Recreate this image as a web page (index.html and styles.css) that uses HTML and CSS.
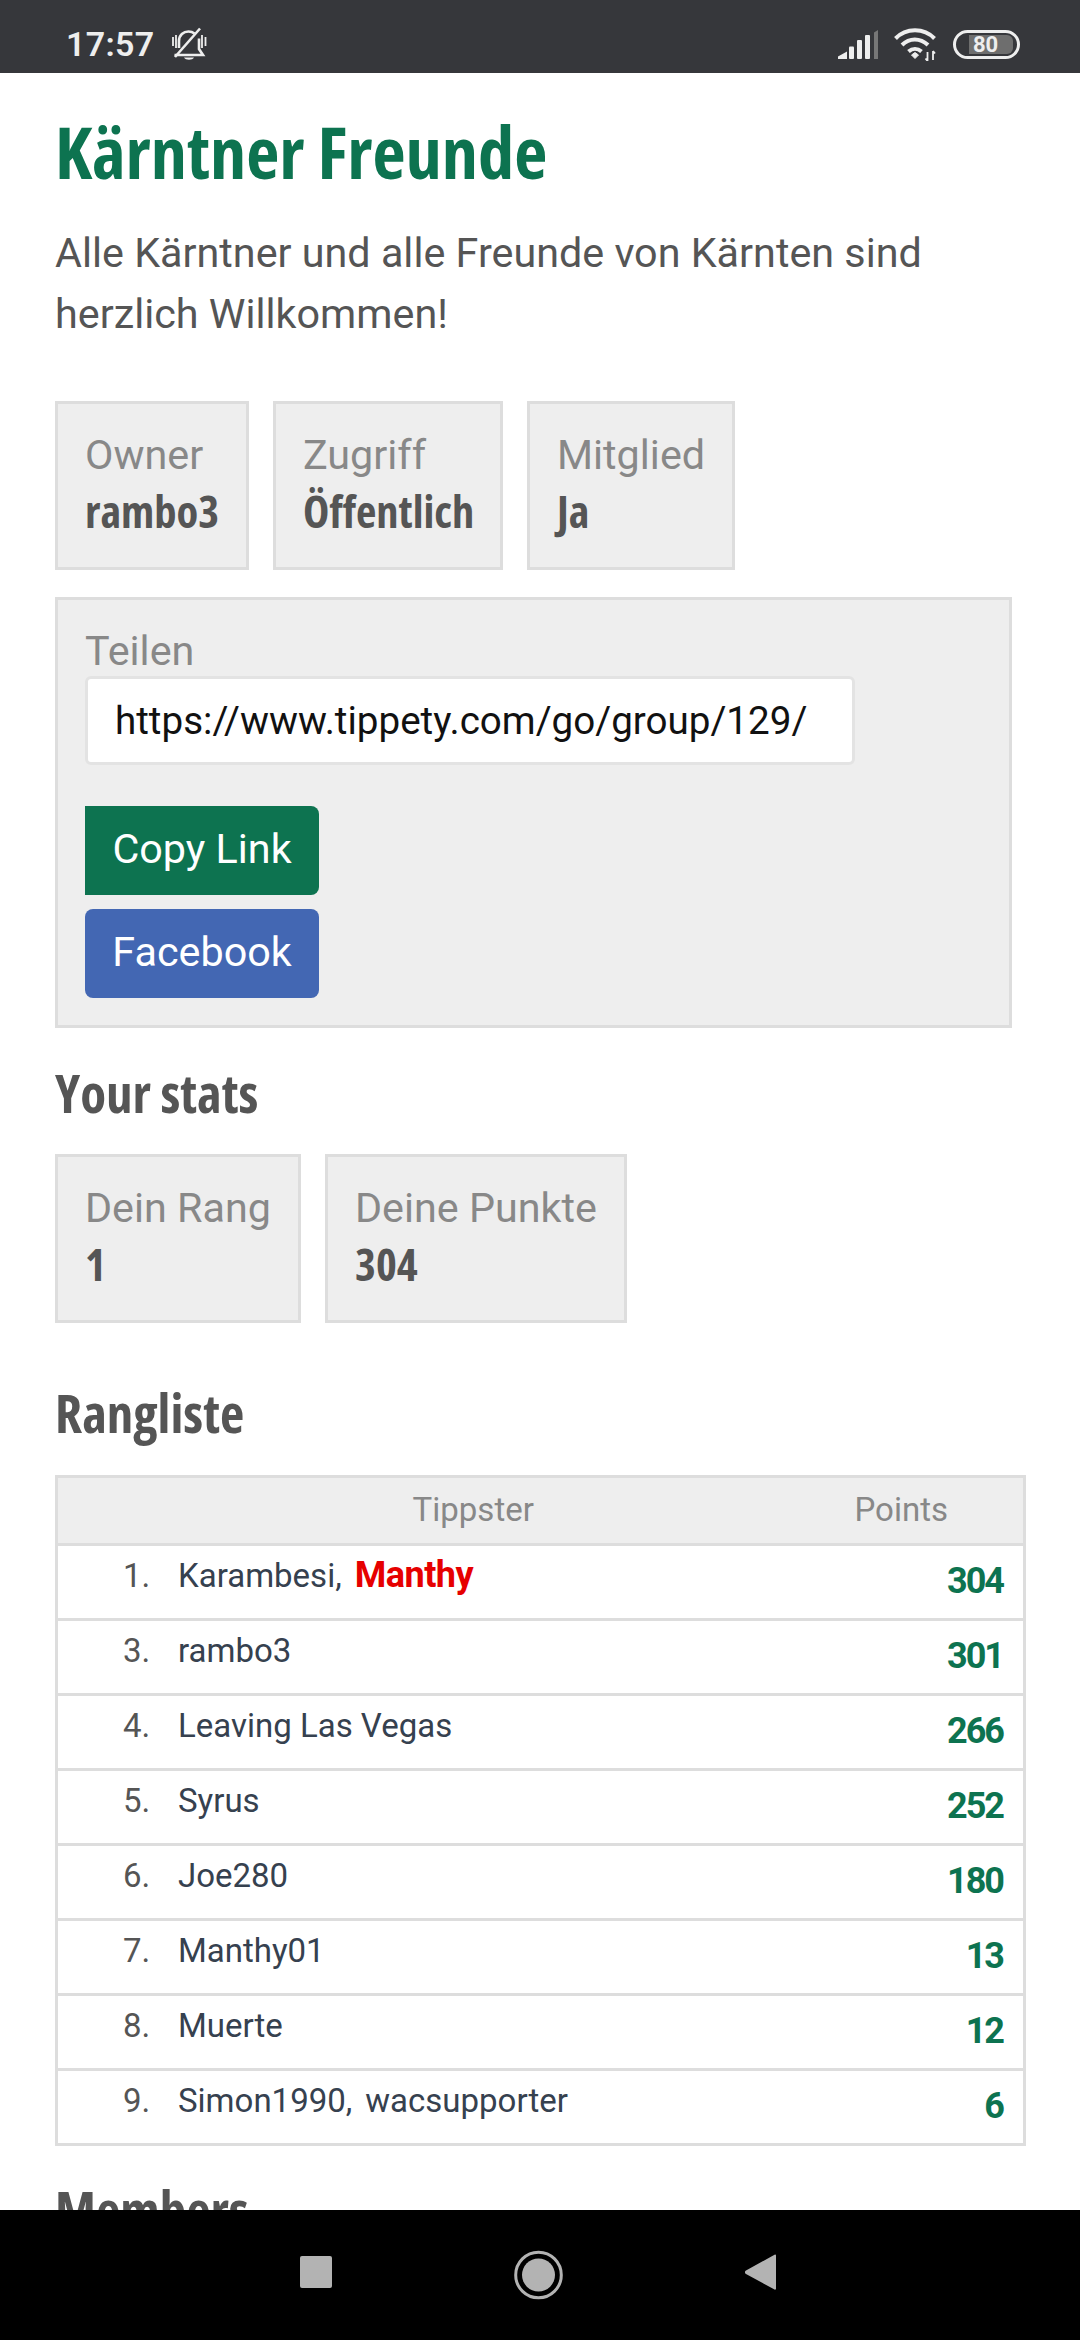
FILE: index.html
```html
<!DOCTYPE html>
<html lang="de">
<head>
<meta charset="utf-8">
<title>Kärntner Freunde</title>
<link rel="stylesheet" href="styles.css">
</head>
<body>
<div class="screen">
  <header class="status">
    <div class="status-left">
      <span class="time">17:57</span>
      <svg class="bell" width="36" height="34" viewBox="0 0 36 34" fill="none" stroke="#eee" stroke-width="2.600">
        <path d="M8 21v-7c0-6 4.500-9.500 9.500-9.500 2.500 0 4.500.8 6 2"/>
        <path d="M28 11.500V22l4 6H3.500"/>
        <path d="M4 30L29 1.500"/>
        <path d="M2 10v9M5 8v13M31 8v13M34.500 10v9" stroke-width="1.800"/>
        <path d="M13 30.500h10c-1.500 3-8.500 3-10 0z" fill="#eee" stroke="none"/>
      </svg>
    </div>
    <div class="status-right">
      <svg class="signal" width="40" height="29" viewBox="0 0 40 29">
        <path d="M0 29v-2.500L9 21.500V29z" fill="#eee"/>
        <rect x="11" y="16.500" width="5" height="12.500" rx="1" fill="#eee"/>
        <rect x="19" y="10" width="5" height="19" rx="1" fill="#eee"/>
        <rect x="27" y="5" width="5" height="24" rx="1" fill="#eee"/>
        <path d="M36 2.500L40 0v29h-4z" fill="#777"/>
      </svg>
      <svg class="wifi" width="43" height="33" viewBox="0 0 43 33" fill="none" stroke="#eee" stroke-width="4">
        <path d="M1.500 10.500C12 -.5 30 -.5 40.500 10.500"/>
        <path d="M8 17c7.500-7.500 18-7.500 26 0"/>
        <path d="M14.500 23.500c4-3.500 9-3.500 13 0"/>
        <path d="M17.500 27l3.500-2.500 3.500 2.500-3.500 3.500z" fill="#eee" stroke="#eee" stroke-width="1"/>
        <path d="M33.500 24v9M31.500 30.500l2 2.500M39 23v9M39 23l2 2.500" stroke-width="1.800"/>
      </svg>
      <div class="battery"><span class="battery-level">80</span></div>
    </div>
  </header>

  <main class="page">
    <h1 class="title">Kärntner Freunde</h1>
    <p class="intro">Alle Kärntner und alle Freunde von Kärnten sind herzlich Willkommen!</p>

    <div class="tiles tiles-top">
      <div class="tile tile-owner"><div class="tile-label">Owner</div><div class="tile-value">rambo3</div></div>
      <div class="tile tile-access"><div class="tile-label">Zugriff</div><div class="tile-value">Öffentlich</div></div>
      <div class="tile tile-member"><div class="tile-label">Mitglied</div><div class="tile-value">Ja</div></div>
    </div>

    <section class="share">
      <div class="tile-label share-label">Teilen</div>
      <div class="share-input">https://www.tippety.com/go/group/129/</div>
      <a class="btn btn-copy">Copy Link</a>
      <a class="btn btn-fb">Facebook</a>
    </section>

    <h2 class="heading heading-stats">Your stats</h2>
    <div class="tiles">
      <div class="tile tile-rank"><div class="tile-label">Dein Rang</div><div class="tile-value">1</div></div>
      <div class="tile tile-points"><div class="tile-label">Deine Punkte</div><div class="tile-value">304</div></div>
    </div>

    <h2 class="heading heading-rank">Rangliste</h2>
    <table class="rank">
      <thead>
        <tr><th class="col-tip">Tippster</th><th class="col-pts">Points</th></tr>
      </thead>
      <tbody>
        <tr><td class="cell-name"><span class="pos">1.</span><span class="name">Karambesi,</span><span class="name me">Manthy</span></td><td class="cell-pts">304</td></tr>
        <tr><td class="cell-name"><span class="pos">3.</span><span class="name">rambo3</span></td><td class="cell-pts">301</td></tr>
        <tr><td class="cell-name"><span class="pos">4.</span><span class="name">Leaving Las Vegas</span></td><td class="cell-pts">266</td></tr>
        <tr><td class="cell-name"><span class="pos">5.</span><span class="name">Syrus</span></td><td class="cell-pts">252</td></tr>
        <tr><td class="cell-name"><span class="pos">6.</span><span class="name">Joe280</span></td><td class="cell-pts">180</td></tr>
        <tr><td class="cell-name"><span class="pos">7.</span><span class="name">Manthy01</span></td><td class="cell-pts">13</td></tr>
        <tr><td class="cell-name"><span class="pos">8.</span><span class="name">Muerte</span></td><td class="cell-pts">12</td></tr>
        <tr><td class="cell-name"><span class="pos">9.</span><span class="name">Simon1990,</span><span class="name">wacsupporter</span></td><td class="cell-pts">6</td></tr>
      </tbody>
    </table>

    <h2 class="heading heading-members">Members</h2>
  </main>

  <nav class="navbar">
    <svg width="32" height="38" viewBox="0 0 32 38"><rect x="0" y="0" width="32" height="32" rx="2" fill="#b3b3b3"/></svg>
    <svg width="49" height="50" viewBox="0 0 49 50"><circle cx="24.500" cy="25" r="22.800" fill="none" stroke="#b3b3b3" stroke-width="3"/><circle cx="24.500" cy="25" r="16.500" fill="#b3b3b3"/></svg>
    <svg width="31" height="42" viewBox="0 0 31 42"><path d="M31 1.500V34.500a1 1 0 0 1-1.500 1L1 20a2 2 0 0 1 0-3.500L29.500.7A1 1 0 0 1 31 1.500z" fill="#b3b3b3"/></svg>
  </nav>
</div>
</body>
</html>
```

FILE: styles.css
```css
* { box-sizing: border-box; }
html, body { margin: 0; padding: 0; background: #fff; }
.screen { width: 1080px; height: 2340px; display: flex; flex-direction: column; overflow: hidden; font-family: Roboto, sans-serif; color: #555; }

.status { height: 73px; flex: none; background: #36373b; display: flex; justify-content: space-between; align-items: center; padding: 15px 60px 0 66px; }
.status-left { display: flex; align-items: center; gap: 17px; }
.time { font-family: Roboto, sans-serif; font-weight: 600; font-size: 34px; color: #eee; letter-spacing: .3px; }
.status-right { display: flex; align-items: center; gap: 16px; }
.battery { width: 67px; height: 29px; border: 3px solid #eee; border-radius: 15px; padding: 2px 4px 2px 13px; display: flex; }
.battery-level { width: 44px; background: #6e6e6e; color: #eee; font-size: 22px; font-weight: 700; line-height: 19px; text-align: left; padding-left: 4px; border-radius: 0 6px 6px 0; }

.page { flex: 1; min-height: 0; overflow: hidden; padding: 0 54px 0 55px; }
.title { margin: 38px 0 0; font-family: "Open Sans", sans-serif; font-stretch: 75%; font-weight: 700; font-size: 72.400px; line-height: 80px; color: #0d7350; }
.intro { margin: 32px 0 0; font-size: 41.300px; line-height: 61px; width: 900px; color: #555; }

.tiles { display: flex; gap: 24px; }
.tiles-top { margin-top: 56px; }
.tile { background: #eee; border: 3px solid #ddd; height: 169px; padding: 23px 27px 0; }
.tile-owner { width: 194px; }
.tile-access { width: 230px; }
.tile-member { width: 208px; }
.tile-rank { width: 246px; }
.tile-points { width: 302px; }
.tile-label { font-size: 41.300px; line-height: 56px; color: #888; white-space: nowrap; }
.tile-value { font-family: "Open Sans", sans-serif; font-stretch: 75%; font-weight: 700; font-size: 44.500px; line-height: 56px; color: #555; white-space: nowrap; }

.share { margin-top: 27px; width: 957px; height: 431px; background: #eee; border: 3px solid #ddd; padding: 27px; }
.share-label { line-height: 49px; }
.share-input { width: 770px; height: 89px; background: #fff; border: 3px solid #e3e3e3; border-radius: 6px; padding: 0 27px; font-size: 38.600px; line-height: 83px; color: #111; white-space: nowrap; }
.btn { display: block; width: 234px; height: 89px; margin-top: 14px; border-radius: 8px; color: #fff; font-size: 41.300px; line-height: 86px; text-align: center; }
.btn-copy { margin-top: 41px; background: #0d7350; border-radius: 0 8px 8px 0; }
.btn-fb { background: #4367b3; }

.heading { margin: 0; font-family: "Open Sans", sans-serif; font-stretch: 75%; font-weight: 700; font-size: 53px; line-height: 70px; color: #555; }
.heading-stats { margin-top: 30px; margin-bottom: 26px; }
.heading-rank { margin-top: 55px; margin-bottom: 27px; }
.heading-members { margin-top: 29px; }

.rank { width: 971px; border-collapse: collapse; table-layout: fixed; }
.rank th { height: 68px; background: #eee; border: 3px solid #ddd; border-left: 0; border-right: 0; padding: 0 0 2px; font-weight: 400; font-size: 33px; color: #888; }
.rank th:first-child, .rank td:first-child { border-left: 3px solid #ddd; }
.rank th:last-child, .rank td:last-child { border-right: 3px solid #ddd; }
.rank th.col-tip { width: 760px; text-align: center; padding-left: 72px; }
.rank th.col-pts { text-align: left; padding-left: 38px; }
.rank td { height: 75px; border-bottom: 3px solid #ddd; padding: 0; }
.cell-name { font-size: 33px; color: #36414f; padding-bottom: 14px !important; white-space: nowrap; }
.pos { display: inline-block; width: 120px; text-align: left; padding-left: 65px; color: #555; }
.name + .name { margin-left: 13px; }
.me { color: #e60000; font-weight: 700; font-size: 36px; letter-spacing: -.5px; }
.cell-pts { text-align: right; padding-right: 20px !important; padding-bottom: 2px !important; font-size: 36px; font-weight: 700; letter-spacing: -2px; color: #0d7350; }

.navbar { flex: none; height: 130px; background: #000; display: flex; justify-content: flex-start; gap: 182px; align-items: center; padding: 0 0 0 300px; }
```
